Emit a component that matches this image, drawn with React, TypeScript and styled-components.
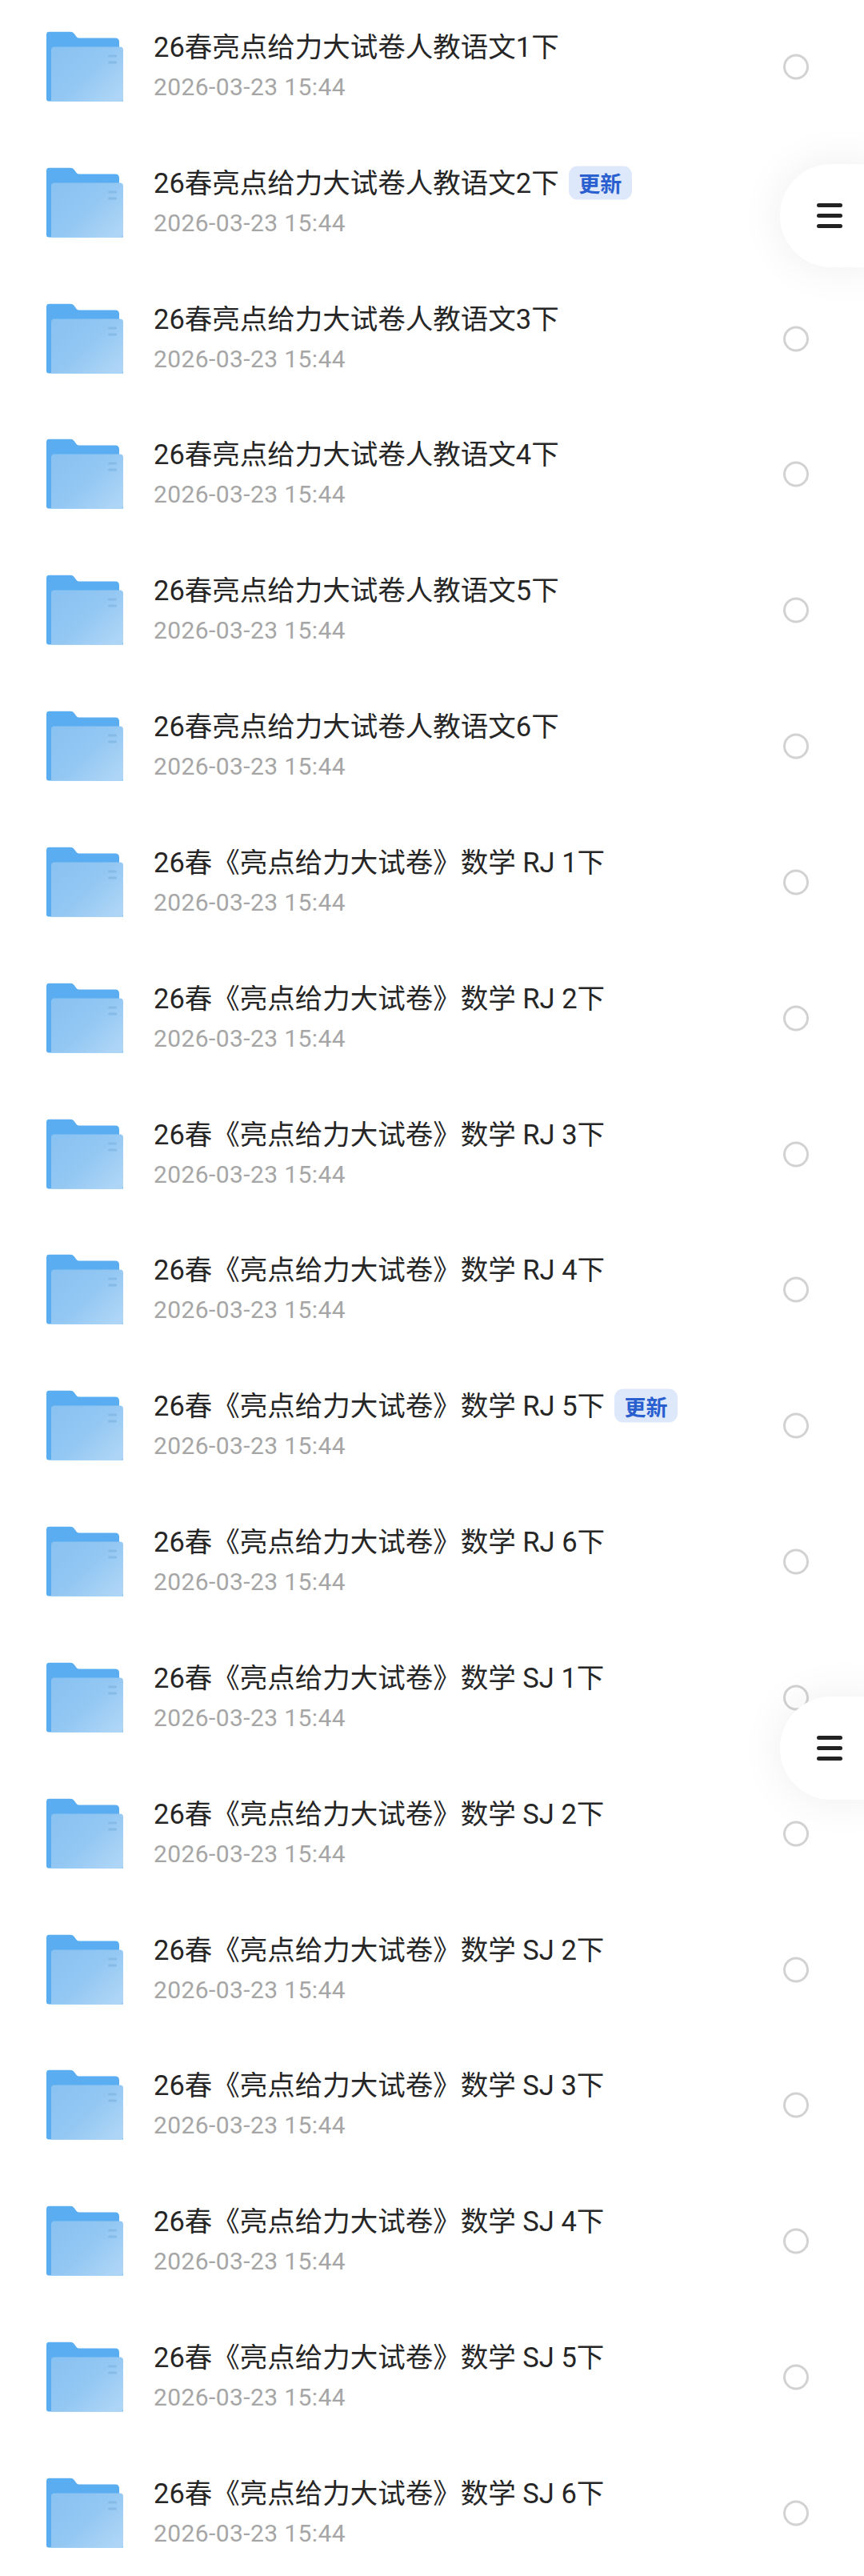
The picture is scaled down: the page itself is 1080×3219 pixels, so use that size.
import React from "react";
import styled, { createGlobalStyle } from "styled-components";

const GlobalStyle = createGlobalStyle`
  html, body {
    margin: 0;
    padding: 0;
    background: #fff;
  }
`;

const Page = styled.div`
  position: relative;
  width: 1080px;
  height: 3219px;
  overflow: hidden;
  background: #fff;
  font-family: Roboto, "Noto Sans CJK SC", sans-serif;
`;

const List = styled.ul`
  list-style: none;
  margin: 0;
  padding: 0;
  transform: translateY(-1.5px);
`;

const Row = styled.li`
  display: flex;
  align-items: center;
  height: 169.83px;
  padding: 0 69px 0 58px;
  box-sizing: border-box;
`;

const Info = styled.div`
  flex: 1;
  display: flex;
  flex-direction: column;
  gap: 7px;
  margin-left: 38px;
  min-width: 0;
  padding-bottom: 5px;
`;

const TitleLine = styled.div`
  display: flex;
  align-items: center;
  gap: 12px;
  height: 48px;
`;

const Title = styled.span`
  font-size: 34.5px;
  line-height: 48px;
  color: #262626;
  white-space: nowrap;
`;

const Badge = styled.span`
  display: inline-flex;
  align-items: center;
  justify-content: center;
  width: 79px;
  height: 42px;
  border-radius: 11px;
  background: #dde8fb;
  color: #2a5fd0;
  font-size: 27px;
  font-weight: 700;
`;

const DateText = styled.span`
  font-size: 30px;
  line-height: 38px;
  color: #a6a6a6;
  letter-spacing: 0.4px;
`;

const Radio = styled.span`
  flex: none;
  width: 32px;
  height: 32px;
  box-sizing: border-box;
  border: 3px solid #d2d2d2;
  border-radius: 50%;
`;

const FloatButton = styled.button<{ $top: number }>`
  position: absolute;
  top: ${(p) => p.$top}px;
  left: 975px;
  width: 125px;
  height: 129px;
  padding: 0 0 0 46px;
  border: none;
  border-radius: 64px 0 0 64px;
  background: #fff;
  box-shadow: 0 0 56px rgba(0, 0, 0, 0.07);
  display: flex;
  flex-direction: column;
  align-items: flex-start;
  justify-content: center;
  gap: 8px;
`;

const Bar = styled.span`
  display: block;
  width: 32px;
  height: 5px;
  border-radius: 3px;
  background: #222;
`;

const FolderSvg = styled.svg`
  flex: none;
  display: block;
  width: 96px;
  height: 88px;
`;

const FolderIcon = ({ id }: { id: number }) => (
  <FolderSvg viewBox="0 0 96 88">
    <defs>
      <linearGradient id={`front-${id}`} x1="0" y1="0.25" x2="0.9" y2="0.95">
        <stop offset="0" stopColor="#8ac2f1" />
        <stop offset="0.5" stopColor="#94c8f3" />
        <stop offset="1" stopColor="#aed5f6" />
      </linearGradient>
    </defs>
    <path
      d="M4 0H29Q33 0 35 3L38 7Q39 8 41 8H86Q91 8 91 13V30H96V87H3Q0 87 0 84V4Q0 0 4 0Z"
      fill="#59adf0"
    />
    <path
      d="M10 19H92Q96 19 96 23V84Q96 87 93 87H6V23Q6 19 10 19Z"
      fill={`url(#front-${id})`}
    />
    <rect x="77" y="29" width="11" height="3" rx="1.5" fill="#86bbe8" />
    <rect x="77" y="37" width="11" height="3" rx="1.5" fill="#86bbe8" />
  </FolderSvg>
);

const chinese = (n: number) => `26春亮点给力大试卷人教语文${n}下`;
const math = (tag: string, n: number) => `26春《亮点给力大试卷》数学 ${tag} ${n}下`;

const files: { title: string; updated?: boolean }[] = [
  { title: chinese(1) },
  { title: chinese(2), updated: true },
  { title: chinese(3) },
  { title: chinese(4) },
  { title: chinese(5) },
  { title: chinese(6) },
  { title: math("RJ", 1) },
  { title: math("RJ", 2) },
  { title: math("RJ", 3) },
  { title: math("RJ", 4) },
  { title: math("RJ", 5), updated: true },
  { title: math("RJ", 6) },
  { title: math("SJ", 1) },
  { title: math("SJ", 2) },
  { title: math("SJ", 2) },
  { title: math("SJ", 3) },
  { title: math("SJ", 4) },
  { title: math("SJ", 5) },
  { title: math("SJ", 6) },
];

const App: React.FC = () => {
  return (
    <Page>
      <GlobalStyle />
      <List>
        {files.map((file, i) => (
          <Row key={i}>
            <FolderIcon id={i} />
            <Info>
              <TitleLine>
                <Title>{file.title}</Title>
                {file.updated && <Badge>更新</Badge>}
              </TitleLine>
              <DateText>2026-03-23 15:44</DateText>
            </Info>
            <Radio />
          </Row>
        ))}
      </List>
      {[205, 2120].map((top) => (
        <FloatButton key={top} $top={top}>
          <Bar />
          <Bar />
          <Bar />
        </FloatButton>
      ))}
    </Page>
  );
};

export default App;
